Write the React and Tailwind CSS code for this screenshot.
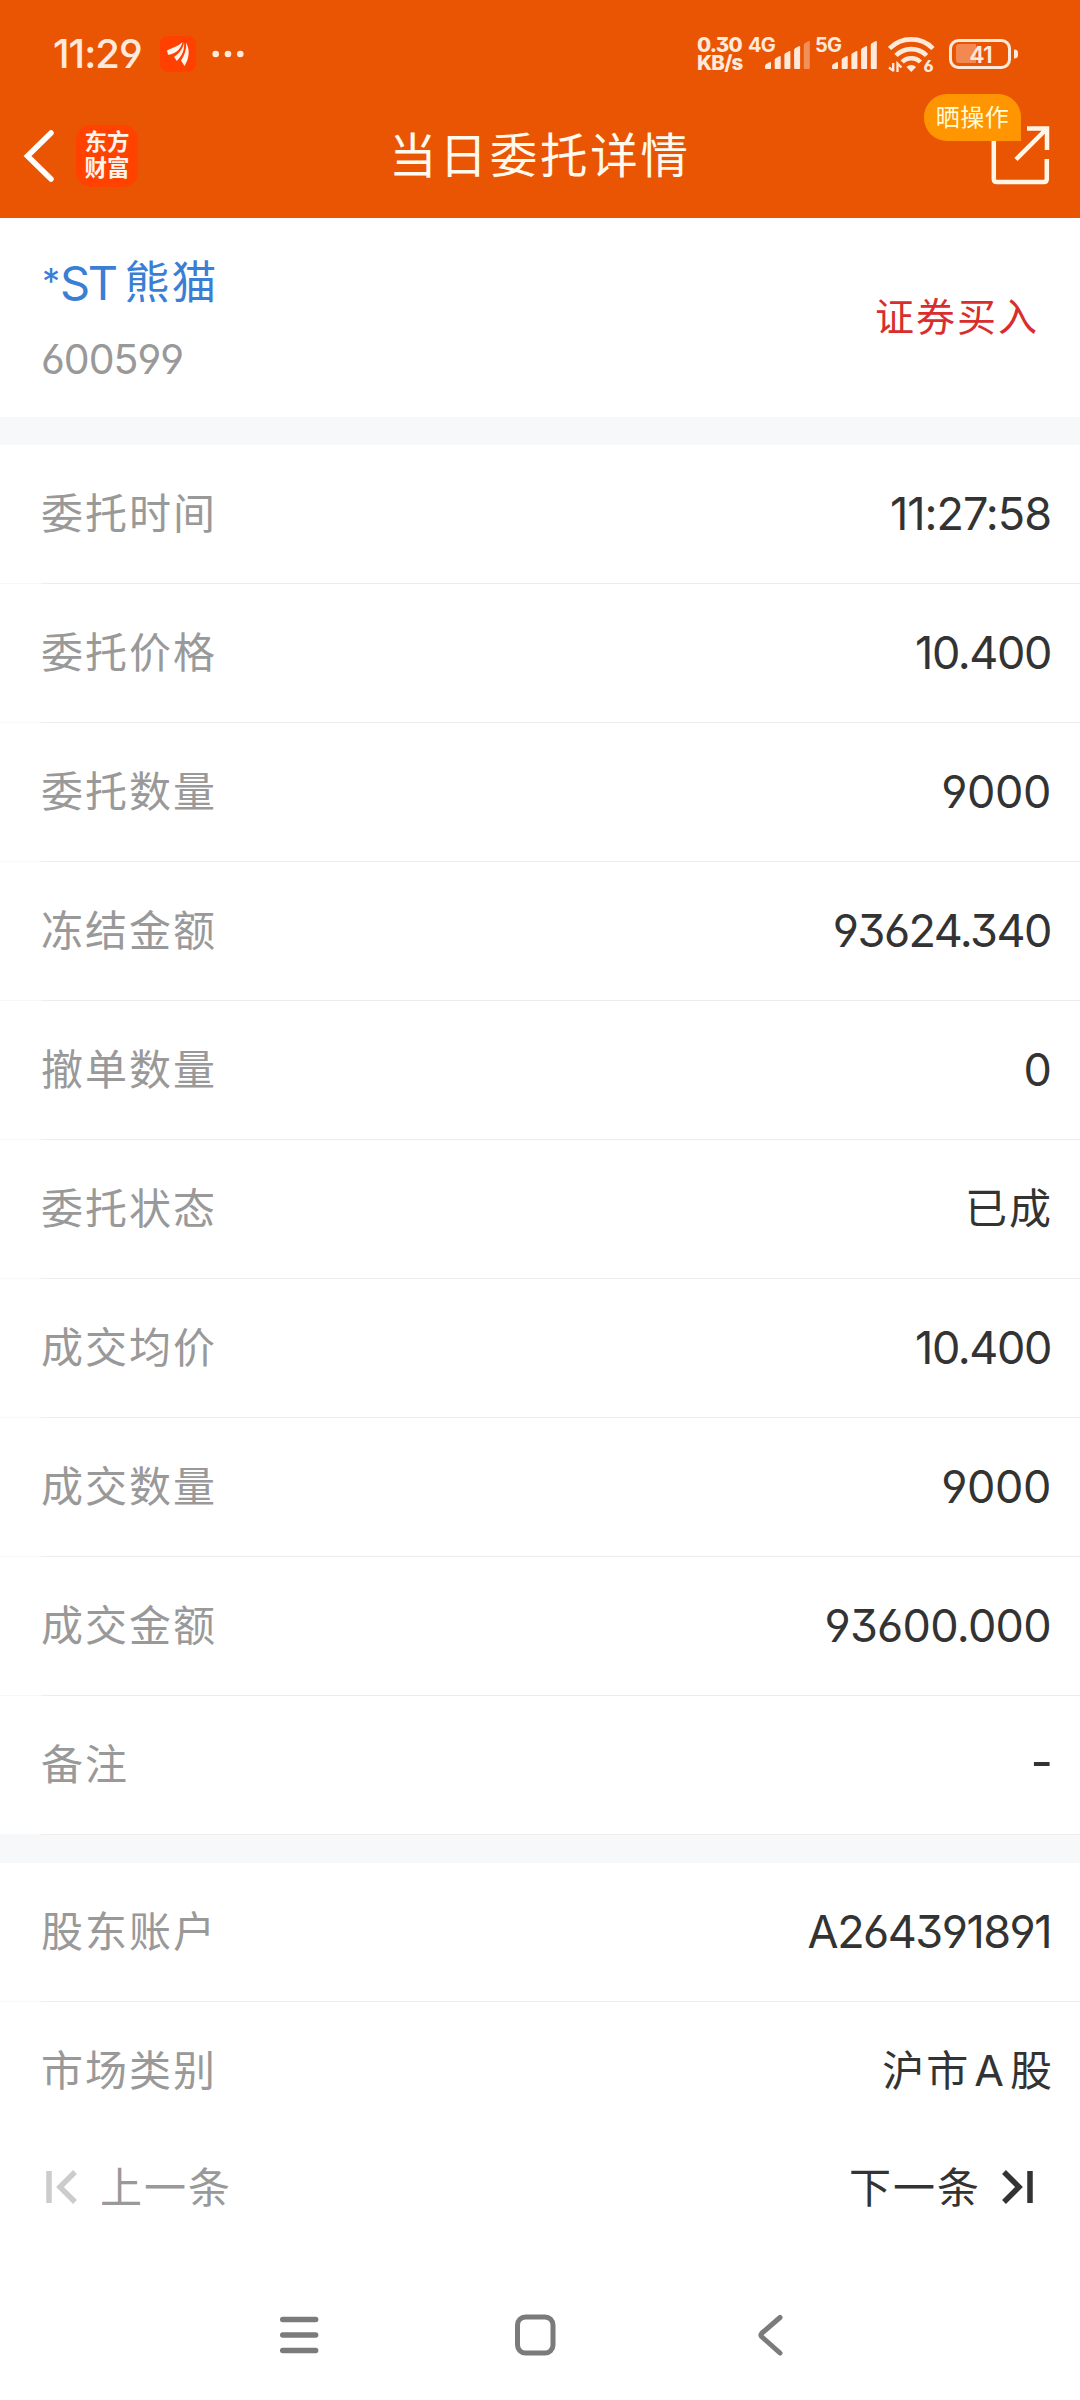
const ORDER_ROWS = [
  { label: '委托时间', value: '11:27:58', tone: 'text-[45px] tracking-[-1px]' },
  { label: '委托价格', value: '10.400', tone: 'text-[45px] tracking-[-1.4px]' },
  { label: '委托数量', value: '9000', tone: 'text-[45px] tracking-[-.4px]' },
  { label: '冻结金额', value: '93624.340', tone: 'text-[45px] tracking-[-1.5px]' },
  { label: '撤单数量', value: '0', tone: 'text-[45px] tracking-[-1px]' },
  { label: '委托状态', value: '已成', tone: 'text-[42px] tracking-[2px] -mr-[2px] pb-[2px]' },
  { label: '成交均价', value: '10.400', tone: 'text-[45px] tracking-[-1.4px]' },
  { label: '成交数量', value: '9000', tone: 'text-[45px] tracking-[-.4px]' },
  { label: '成交金额', value: '93600.000', tone: 'text-[45px] tracking-[-.7px]' },
  { label: '备注', value: '-', tone: 'text-[49px] leading-[50px] pb-[7px] -mr-[2px]' },
]

const ACCOUNT_ROWS = [
  { label: '股东账户', value: 'A264391891', tone: 'text-[45px] tracking-[-1.5px]' },
  {
    label: '市场类别',
    value: <>沪市<span className="mr-[6px] ml-[4px] text-[43px] tracking-normal">A</span>股</>,
    tone: 'text-[42px] tracking-[2px] -mr-[3px] pb-[2px]',
  },
]

const BAR_HEIGHTS = [7, 13, 18, 23, 28]

function SignalBars({ level }) {
  return (
    <svg width="45" height="29" viewBox="0 0 45 29" fill="#ffe9db">
      {BAR_HEIGHTS.map((h, i) => (
        <path key={h} opacity={i < level ? 1 : 0.4}
          transform={`translate(${i * 9.7} ${29 - h})`}
          d={`M0 4q0-1 1-1.700L4.500.3Q6-.5 6 1V${h - 1}q0 1-1 1H1q-1 0-1-1z`} />
      ))}
    </svg>
  )
}

function WifiIcon() {
  return (
    <svg width="48" height="44" viewBox="0 0 48 44" fill="none" stroke="#ffe9db" strokeWidth="4.600">
      <path d="M1.500 12.500a30.500 30.500 0 0 1 43.500 0" />
      <path d="M8 19.500a21.500 21.500 0 0 1 30.600 0" />
      <path d="M14.200 26a12.800 12.800 0 0 1 18.200 0" />
      <path d="M18.500 31a6.500 6.500 0 0 1 9.600 0l-4.800 5z" fill="#ffe9db" stroke="none" />
      <path d="M5.200 27v8.500M1 31.500l4 3M9.500 36v-8.500l4 4" strokeWidth="2.300" />
      <text x="35.500" y="36" fill="#ffe9db" stroke="none" fontSize="16" fontWeight="800" fontFamily="Inter, sans-serif">6</text>
    </svg>
  )
}

function StatusBar() {
  return (
    <div className="flex h-[94px] items-start pt-9 pl-[53px] pr-[61px] text-[#ffe9db]">
      <span className="w-[107px] text-[40px] leading-9 font-medium tracking-[-1px] whitespace-nowrap">11:29</span>
      <svg width="36" height="36" viewBox="0 0 36 36">
        <rect width="36" height="36" rx="8" fill="#ff4000" />
        <g fill="#fff3ea">
          <path d="M22.500 6C19 10 14 11 7 14.500l1 4.200c6-.4 12.500-4 14.500-12.700z" />
          <path d="M24 6.500c-1 6-4.500 10.500-10 14.500l2.800 4c5-5 8.200-11 7.200-18.500z" />
          <path d="M26 6.500c.8 6.500-1.500 13-5 18l3.500 5.500c5-7.500 5.500-17 1.500-23.500z" />
        </g>
      </svg>
      <svg className="ml-4 mt-[14px]" width="32" height="8" viewBox="0 0 32 8" fill="#ffe9db">
        <circle cx="3.700" cy="4" r="3.300" />
        <circle cx="16" cy="4" r="3.300" />
        <circle cx="28.300" cy="4" r="3.300" />
      </svg>
      <div className="ml-auto flex items-start">
        <div className="w-[51px] text-[20.500px] leading-[18px] font-extrabold tracking-[-.8px] whitespace-nowrap">
          <div>0.30</div>
          <div>KB/s</div>
        </div>
        <div className="flex w-[67px] items-start">
          <span className="w-[17px] text-[20px] leading-[18px] font-bold tracking-[-.8px] whitespace-nowrap">4G</span>
          <div className="pt-1"><SignalBars level={4} /></div>
        </div>
        <div className="flex w-[73px] items-start">
          <span className="w-[17px] text-[20px] leading-[18px] font-bold tracking-[-.8px] whitespace-nowrap">5G</span>
          <div className="pt-1"><SignalBars level={5} /></div>
        </div>
        <WifiIcon />
        <svg className="ml-[13px] mt-[3px]" width="70" height="30" viewBox="0 0 70 30">
          <rect x="1.500" y="1.500" width="59" height="27" rx="8" fill="none" stroke="#ffe9db" strokeWidth="3" />
          <path d="M10 5h17v19h-17q-3 0-3-3v-13q0-3 3-3z" fill="#f38850" />
          <path d="M65 10.500q4 0 4 3v3q0 3-4 3z" fill="#ffe9db" />
          <text x="31.500" y="23.500" textAnchor="middle" fill="#ffe9db" fontSize="23" fontWeight="600" fontFamily="Inter, sans-serif" letterSpacing="-1">41</text>
        </svg>
      </div>
    </div>
  )
}

function TitleBar() {
  return (
    <div className="relative flex h-[124px] items-center justify-between">
      <div className="flex items-center pl-[22px]">
        <svg width="32" height="52" viewBox="0 0 32 52" fill="none" stroke="#fff" strokeWidth="5.500">
          <path d="M29 3 5.500 26 29 49" strokeLinecap="round" />
        </svg>
        <div className="ml-[22px] flex h-[62px] w-[62px] flex-col items-center justify-center rounded-[15px] bg-[#ff4200] pb-[3px] text-[22.500px] leading-[26px] font-bold text-[#fff3ea]">
          <span>东方</span>
          <span>财富</span>
        </div>
      </div>
      <h1 className="absolute inset-x-0 top-[32px] text-center text-[47.500px] leading-[60px] font-normal tracking-[2.800px] text-[#fff9ee]">当日委托详情</h1>
      <svg className="mr-[29px]" width="60" height="60" viewBox="0 0 60 60" fill="none" stroke="#fff6e8" strokeWidth="4.500">
        <path d="M2.800 10v43q0 3 3 3h47q3 0 3-3V33" />
        <path d="M36 2.500h20v21.500M55.500 3 25 33.500" />
      </svg>
      <div className="absolute top-0 left-[924px] flex h-[47px] w-[97px] items-center justify-center rounded-[23px] rounded-br-none bg-[#ff9500] text-[24px] tracking-[.5px] text-[#fffbd8]">晒操作</div>
    </div>
  )
}

function Row({ label, value, tone, last }) {
  // the last row leaves its bottom line to whatever follows
  return (
    <div className={`flex ${last ? 'h-[138px]' : 'h-[139px]'}`}>
      <div className={`w-[41px] ${last ? '' : 'border-b border-[#f8f8f8]'}`} />
      <div className={`flex flex-1 items-center justify-between pr-[29px] ${last ? '' : 'border-b border-[#ededed]'}`}>
        <span className="pb-[2px] text-[42px] tracking-[2px] text-[#999]">{label}</span>
        <span className={tone}>{value}</span>
      </div>
    </div>
  )
}

function RowGroup({ rows }) {
  return (
    <section>
      {rows.map((r, i) => (
        <Row key={r.label} {...r} last={i === rows.length - 1} />
      ))}
    </section>
  )
}

function Pager() {
  return (
    <div className="flex h-[94px] items-center justify-between pr-[46px] pl-[45px] text-[42px] tracking-[2px]">
      <div className="flex items-center gap-[23px] text-[#999]">
        <svg width="32" height="34" viewBox="0 0 32 34" fill="none" stroke="#ccc" strokeWidth="5.500">
          <path d="M4 1v32M30 2 15 17l15 15" />
        </svg>
        <span>上一条</span>
      </div>
      <div className="flex items-center gap-[21px]">
        <span>下一条</span>
        <svg width="32" height="34" viewBox="0 0 32 34" fill="none" stroke="#333" strokeWidth="5.500">
          <path d="M28 1v32M2 2l15 15L2 32" />
        </svg>
      </div>
    </div>
  )
}

function SystemNav() {
  return (
    <nav className="flex h-[130px] items-center pl-[279px]">
      <svg width="41" height="42" viewBox="0 0 41 42" stroke="#7b7b7b" strokeWidth="5.400" strokeLinecap="round">
        <path d="M3.700 5.500h33M3.700 21h33M3.700 36.500h33" />
      </svg>
      <svg className="ml-[194px]" width="42" height="42" viewBox="0 0 42 42" fill="none" stroke="#7b7b7b" strokeWidth="5">
        <rect x="3.500" y="3" width="35.500" height="36" rx="8" />
      </svg>
      <svg className="ml-[200px]" width="28" height="42" viewBox="0 0 28 42" fill="none" stroke="#7b7b7b" strokeWidth="5" strokeLinecap="round" strokeLinejoin="round">
        <path d="M24 3.500 6 19q-2 2 0 4l18 16" />
      </svg>
    </nav>
  )
}

export default function App() {
  return (
    <div className="min-h-[2400px] w-[1080px] bg-white font-['Inter','Noto_Sans_CJK_SC',sans-serif] text-[#333] [font-feature-settings:'cv03','cv04','cv09']">
      <header className="h-[218px] bg-[#ea5504]">
        <StatusBar />
        <TitleBar />
      </header>

      <section className="flex h-[199px] items-center justify-between pr-[41px] pl-[42px]">
        <div className="pt-[6px]">
          <div className="flex h-[60px] items-center text-[45px] leading-[60px] text-[#3b7fd4]">
            <span className="pb-[4px] text-[36px]">*</span>
            <span className="mr-[9px] text-[47px] tracking-[-2.500px]">ST</span>
            <span className="tracking-[2px]">熊猫</span>
          </div>
          <div className="mt-4 -ml-px text-[41px] leading-[60px] tracking-[-1px] text-[#999]">600599</div>
        </div>
        <span className="text-[39px] tracking-[2px] text-[#d92e2e]">证券买入</span>
      </section>

      <div className="h-7 bg-[#f6f8fa]" />
      <RowGroup rows={ORDER_ROWS} />
      <div className="h-[29px] bg-[#f6f8fa] pl-[41px]">
        <div className="h-px bg-[#ededed]" />
      </div>
      <RowGroup rows={ACCOUNT_ROWS} />
      <Pager />
      <div className="h-9" />
      <SystemNav />
    </div>
  )
}
